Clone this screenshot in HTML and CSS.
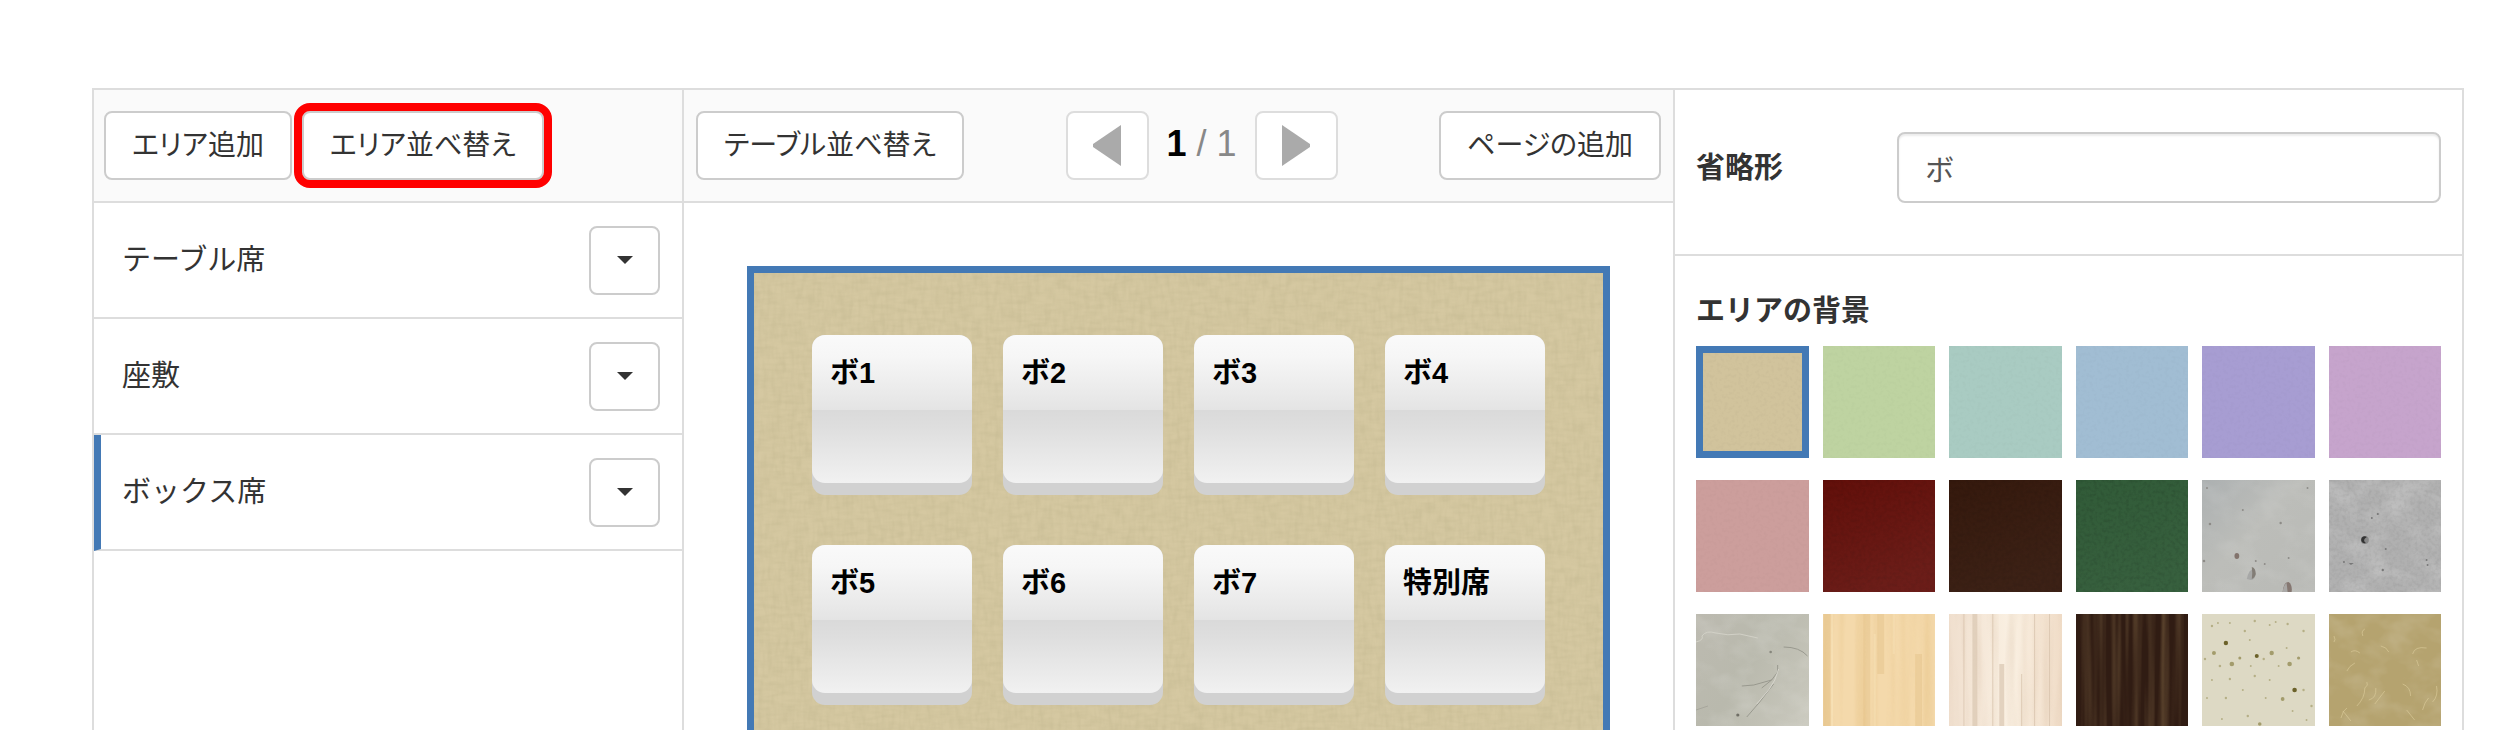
FILE: index.html
```html
<!DOCTYPE html>
<html lang="ja">
<head>
<meta charset="utf-8">
<title>エリア設定</title>
<link rel="stylesheet" href="styles.css">
</head>
<body>
<svg class="defs" width="0" height="0" aria-hidden="true">
  <defs>
    <filter id="weave-v" x="0" y="0" width="100%" height="100%">
      <feTurbulence type="fractalNoise" baseFrequency="0.22 0.06" numOctaves="2" seed="3"/>
      <feColorMatrix values="0 0 0 0 .45  0 0 0 0 .4  0 0 0 0 .22  .8 0 0 0 -.3"/>
    </filter>
    <filter id="weave-h" x="0" y="0" width="100%" height="100%">
      <feTurbulence type="fractalNoise" baseFrequency="0.06 0.22" numOctaves="2" seed="8"/>
      <feColorMatrix values="0 0 0 0 .45  0 0 0 0 .4  0 0 0 0 .22  .8 0 0 0 -.3"/>
    </filter>
    <filter id="grain" x="0" y="0" width="100%" height="100%">
      <feTurbulence type="fractalNoise" baseFrequency="0.28" numOctaves="2" seed="5"/>
      <feColorMatrix values="0 0 0 0 0  0 0 0 0 0  0 0 0 0 0  1 0 0 0 -.42"/>
    </filter>
    <filter id="cloud" x="0" y="0" width="100%" height="100%">
      <feTurbulence type="fractalNoise" baseFrequency="0.035 0.05" numOctaves="3" seed="12"/>
      <feColorMatrix values="0 0 0 0 1  0 0 0 0 1  0 0 0 0 1  2 0 0 0 -.8"/>
    </filter>
    <filter id="wood" x="0" y="0" width="100%" height="100%">
      <feTurbulence type="fractalNoise" baseFrequency="0.09 0.004" numOctaves="2" seed="4"/>
      <feColorMatrix values="0 0 0 0 .75  0 0 0 0 .5  0 0 0 0 .2  1.4 0 0 0 -.55"/>
    </filter>
    <filter id="pale-wood" x="0" y="0" width="100%" height="100%">
      <feTurbulence type="fractalNoise" baseFrequency="0.1 0.008" numOctaves="2" seed="21"/>
      <feColorMatrix values="0 0 0 0 .68  0 0 0 0 .52  0 0 0 0 .38  1.4 0 0 0 -.6"/>
    </filter>
    <filter id="dark-wood" x="0" y="0" width="100%" height="100%">
      <feTurbulence type="fractalNoise" baseFrequency="0.14 0.005" numOctaves="2" seed="9"/>
      <feColorMatrix values="0 0 0 0 .42  0 0 0 0 .28  0 0 0 0 .12  1.2 0 0 0 -.45"/>
    </filter>
    <linearGradient id="shade" x1="0" y1="0" x2="0.4" y2="1">
      <stop offset="0" stop-color="#fff" stop-opacity="0"/>
      <stop offset="1" stop-color="#fff" stop-opacity=".06"/>
    </linearGradient>
  </defs>
</svg>

<main class="app">
  <section class="areas">
    <header class="toolbar toolbar-areas">
      <button class="btn" type="button">エリア追加</button>
      <button class="btn highlighted" type="button">エリア並べ替え</button>
    </header>
    <ul class="area-list">
      <li class="area-row">
        <span class="area-name">テーブル席</span>
        <button class="btn btn-caret" type="button" aria-label="テーブル席のメニュー"><svg width="16" height="8" viewBox="0 0 16 8"><path d="M0 0h16L8 8z" fill="#333"/></svg></button>
      </li>
      <li class="area-row">
        <span class="area-name">座敷</span>
        <button class="btn btn-caret" type="button" aria-label="座敷のメニュー"><svg width="16" height="8" viewBox="0 0 16 8"><path d="M0 0h16L8 8z" fill="#333"/></svg></button>
      </li>
      <li class="area-row selected">
        <span class="area-name">ボックス席</span>
        <button class="btn btn-caret" type="button" aria-label="ボックス席のメニュー"><svg width="16" height="8" viewBox="0 0 16 8"><path d="M0 0h16L8 8z" fill="#333"/></svg></button>
      </li>
    </ul>
  </section>

  <section class="editor">
    <header class="toolbar toolbar-editor">
      <button class="btn" type="button">テーブル並べ替え</button>
      <div class="pager">
        <button class="btn btn-page" type="button" aria-label="前のページ"><svg width="28" height="41" viewBox="0 0 28 41"><path d="M28 0v41L0 22v-3z" fill="#aaa"/></svg></button>
        <span class="page-count"><strong>1</strong> / 1</span>
        <button class="btn btn-page" type="button" aria-label="次のページ"><svg width="28" height="41" viewBox="0 0 28 41"><path d="M0 0v41L28 22v-3z" fill="#aaa"/></svg></button>
      </div>
      <button class="btn" type="button">ページの追加</button>
    </header>
    <div class="canvas-wrap">
      <div class="canvas">
        <svg class="canvas-texture" width="100%" height="100%" aria-hidden="true">
          <rect width="100%" height="100%" filter="url(#weave-v)"/>
          <rect width="100%" height="100%" filter="url(#weave-h)"/>
        </svg>
        <div class="tables">
          <div class="seat"><div class="seat-face">ボ1</div></div>
          <div class="seat"><div class="seat-face">ボ2</div></div>
          <div class="seat"><div class="seat-face">ボ3</div></div>
          <div class="seat"><div class="seat-face">ボ4</div></div>
          <div class="seat"><div class="seat-face">ボ5</div></div>
          <div class="seat"><div class="seat-face">ボ6</div></div>
          <div class="seat"><div class="seat-face">ボ7</div></div>
          <div class="seat"><div class="seat-face">特別席</div></div>
        </div>
      </div>
    </div>
  </section>

  <section class="settings">
    <div class="field">
      <label class="field-label" for="short-name">省略形</label>
      <input class="field-input" id="short-name" type="text" value="ボ">
    </div>
    <fieldset class="backgrounds">
      <legend class="backgrounds-title">エリアの背景</legend>
      <div class="swatches">
        <label class="swatch beige"><input type="radio" name="bg" aria-label="ベージュ" checked><svg><rect width="100%" height="100%" filter="url(#grain)" opacity=".05"/></svg></label>
        <label class="swatch lime"><input type="radio" name="bg" aria-label="黄緑"><svg><rect width="100%" height="100%" filter="url(#grain)" opacity=".04"/></svg></label>
        <label class="swatch mint"><input type="radio" name="bg" aria-label="ミント"><svg><rect width="100%" height="100%" filter="url(#grain)" opacity=".04"/></svg></label>
        <label class="swatch blue"><input type="radio" name="bg" aria-label="水色"><svg><rect width="100%" height="100%" filter="url(#grain)" opacity=".04"/></svg></label>
        <label class="swatch violet"><input type="radio" name="bg" aria-label="紫"><svg><rect width="100%" height="100%" filter="url(#grain)" opacity=".04"/></svg></label>
        <label class="swatch pink"><input type="radio" name="bg" aria-label="ピンク"><svg><rect width="100%" height="100%" filter="url(#grain)" opacity=".04"/></svg></label>

        <label class="swatch rose"><input type="radio" name="bg" aria-label="ローズ"><svg><rect width="100%" height="100%" filter="url(#grain)" opacity=".04"/></svg></label>
        <label class="swatch red"><input type="radio" name="bg" aria-label="赤"><svg><rect width="100%" height="100%" filter="url(#grain)" opacity=".2"/><rect width="100%" height="100%" fill="url(#shade)"/></svg></label>
        <label class="swatch brown"><input type="radio" name="bg" aria-label="茶"><svg><rect width="100%" height="100%" filter="url(#grain)" opacity=".2"/><rect width="100%" height="100%" fill="url(#shade)" opacity=".6"/></svg></label>
        <label class="swatch green"><input type="radio" name="bg" aria-label="緑"><svg><rect width="100%" height="100%" filter="url(#grain)" opacity=".25"/><rect width="100%" height="100%" fill="url(#shade)" opacity=".5"/></svg></label>
        <label class="swatch concrete"><input type="radio" name="bg" aria-label="コンクリート"><svg viewBox="0 0 113 112" preserveAspectRatio="none">
          <rect width="113" height="112" filter="url(#cloud)" opacity=".1"/>
          <g fill="#8d8b87"><circle cx="5" cy="8" r="1"/><circle cx="106" cy="8" r="1"/><circle cx="41" cy="30" r="1"/><circle cx="8" cy="44" r="1.3"/><circle cx="79" cy="43" r="1.2"/><circle cx="2" cy="81" r="1.3"/><circle cx="54" cy="81" r="1"/><circle cx="87" cy="78" r="1"/><circle cx="63" cy="84" r="1"/></g>
          <ellipse cx="35" cy="76" rx="2.4" ry="3" fill="#82736c"/>
          <path d="M45 99q2-10 7-10l2 5q-1 6-5 6z" fill="#a7a8a7"/><path d="M50 87q4 1 4 7-1 4-4 5 1-6 0-12z" fill="#827d76"/>
          <path d="M81 112q1-10 6-10 4 3 3 10z" fill="#857771"/><path d="M81 112q1-7 4-9l1 9z" fill="#a9a8a6"/>
        </svg></label>
        <label class="swatch stone"><input type="radio" name="bg" aria-label="石"><svg viewBox="0 0 113 112" preserveAspectRatio="none">
          <rect width="113" height="112" filter="url(#cloud)" opacity=".2"/>
          <rect width="113" height="112" filter="url(#grain)" opacity=".12"/>
          <g fill="#777"><circle cx="49" cy="34" r="1.1"/><circle cx="43" cy="38" r="1"/><circle cx="15" cy="82" r="1"/><path d="M20 83l5 0-3 2z"/><circle cx="54" cy="90" r="1.2"/><circle cx="57" cy="69" r="1"/><circle cx="98" cy="80" r="1"/><circle cx="99" cy="85" r="1"/></g>
          <circle cx="36" cy="60" r="4" fill="#888"/><path d="M38 57a3.500 3.500 0 1 0-1 6q-4-3 1-6z" fill="#333"/>
        </svg></label>

        <label class="swatch plaster"><input type="radio" name="bg" aria-label="漆喰"><svg viewBox="0 0 113 112" preserveAspectRatio="none">
          <rect width="113" height="112" filter="url(#cloud)" opacity=".14"/>
          <path d="M0 28q8-2 6-6 4-6 14-3 12 3 24 1l18 4" fill="none" stroke="#d2d1c7"/>
          <path d="M88 33q16 0 24 9M82 51l0 7-6 8-18 5-12 1M76 66l-10 8M78 70l-14 18-13 15" fill="none" stroke="#8f8f85" stroke-width=".8"/>
          <path d="M83 55q-3 12-10 21l-12 14" fill="none" stroke="#dddcd4" stroke-width=".8"/>
          <circle cx="75" cy="38" r="1.300" fill="#87877d"/><circle cx="42" cy="101" r="1.600" fill="#6f6e65"/><path d="M0 96l12-4" stroke="#a7a69c"/>
        </svg></label>
        <label class="swatch light-wood"><input type="radio" name="bg" aria-label="明るい木目"><svg viewBox="0 0 113 112" preserveAspectRatio="none">
          <path d="M4 0v112M44 0v112M58 0v60M96 40v72" stroke="#e6c48d" stroke-width="7" opacity=".5"/><path d="M9 0v112M52 20v92M71 0v40" stroke="#fae5bd" stroke-width="2" opacity=".6"/>
          <rect width="113" height="112" filter="url(#wood)" opacity=".6"/>
        </svg></label>
        <label class="swatch white-wood"><input type="radio" name="bg" aria-label="白い木目"><svg viewBox="0 0 113 112" preserveAspectRatio="none">
          <path d="M26 0v112M53 50v62" stroke="#dac7b2" stroke-width="5" opacity=".7"/><path d="M15 0v112M44 0v112M73 60v52M86 0v112M101 0v112" stroke="#d8c4ae" opacity=".8"/>
          <rect width="113" height="112" filter="url(#pale-wood)" opacity=".5"/>
        </svg></label>
        <label class="swatch black-wood"><input type="radio" name="bg" aria-label="暗い木目"><svg><rect width="100%" height="100%" filter="url(#dark-wood)" opacity=".6"/></svg></label>
        <label class="swatch terrazzo"><input type="radio" name="bg" aria-label="テラゾー"><svg viewBox="0 0 113 112" preserveAspectRatio="none">
          <g fill="#b5af86"><circle cx="10" cy="12" r="1.2"/><circle cx="16" cy="9" r="1"/><circle cx="28" cy="9" r="1"/><circle cx="53" cy="7" r="1.2"/><circle cx="68" cy="11" r="1"/><circle cx="74" cy="8" r="1"/><circle cx="86" cy="10" r="1.2"/><circle cx="43" cy="17" r="1.200"/><circle cx="102" cy="17" r="1.200"/><circle cx="48" cy="26" r="1"/><circle cx="85" cy="34" r="1"/><circle cx="18" cy="52" r="1.300"/><circle cx="49" cy="52" r="1"/><circle cx="62" cy="45" r="1.200"/><circle cx="77" cy="52" r="1"/><circle cx="28" cy="65" r="1.200"/><circle cx="53" cy="62" r="1.200"/><circle cx="10" cy="66" r="1"/><circle cx="68" cy="66" r="1"/><circle cx="24" cy="84" r="1.200"/><circle cx="41" cy="76" r="1"/><circle cx="64" cy="84" r="1"/><circle cx="102" cy="76" r="1.200"/><circle cx="46" cy="102" r="1.200"/><circle cx="20" cy="105" r="1"/><circle cx="91" cy="97" r="1"/><circle cx="110" cy="92" r="1.200"/><circle cx="5" cy="84" r="1"/><circle cx="3" cy="45" r="1.200"/><circle cx="105" cy="106" r="1"/></g>
          <g fill="#a39c6c"><circle cx="12" cy="39" r="2"/><circle cx="30" cy="50" r="2.300"/><circle cx="38" cy="44" r="1.500"/><circle cx="70" cy="39" r="2.200"/><circle cx="88" cy="50" r="2.300"/><circle cx="97" cy="44" r="1.600"/><circle cx="81" cy="85" r="1.900"/><circle cx="58" cy="110" r="1.800"/></g>
          <g fill="#6b6129"><circle cx="24" cy="29" r="2.200"/><circle cx="55" cy="42" r="2"/><circle cx="93" cy="76" r="2.300"/></g>
        </svg></label>
        <label class="swatch washi"><input type="radio" name="bg" aria-label="和紙"><svg viewBox="0 0 113 112" preserveAspectRatio="none">
          <rect width="113" height="112" filter="url(#cloud)" opacity=".14"/>
          <g fill="none" stroke="#ddcf9e" stroke-width="1" opacity=".6"><path d="M36 15q-4 2-2 7M5 22q2 4 0 6M18 57q2-5 8-8M84 40q2-8 14-6M52 32q6 1 8 6M28 92q8-8 8-18 4-3 2-6M46 90l10-13M74 70q8 3 8 12M108 72q2 10-4 16M94 96q2-8 6-12M12 104q2-8 6-10M14 97l8 10M40 86q8-2 7-12M78 96l8 10M88 46l2 6M22 38q4-3 9 1"/></g>
        </svg></label>
      </div>
    </fieldset>
  </section>
</main>
</body>
</html>
```
FILE: styles.css
```css
:root {
  --line: #ddd;
  --control-line: #ccc;
  --accent: #4379b5;
  --text: #333;
}

* {
  box-sizing: border-box;
}

body {
  margin: 0;
  min-height: 100vh;
  display: flex;
  flex-direction: column;
  padding: 88px 40px 0 92px;
  background: #fff;
  color: var(--text);
  font-family: "Liberation Sans", "Noto Sans CJK JP", sans-serif;
  font-size: 29px;
  line-height: 40px;
}

.defs {
  position: absolute;
}

.app {
  flex: 1;
  display: grid;
  grid-template-columns: 590fr 991fr 787fr;
  border: 2px solid var(--line);
  border-bottom: 0;
}

.areas,
.editor {
  display: flex;
  flex-direction: column;
  border-right: 2px solid var(--line);
}

.toolbar {
  display: flex;
  align-items: center;
  padding: 21px 12px;
  border-bottom: 2px solid var(--line);
  background: #fafafa;
}

.toolbar-areas {
  gap: 10px;
  padding-left: 10px;
}

.toolbar-editor {
  justify-content: space-between;
}

.btn {
  display: inline-flex;
  align-items: center;
  justify-content: center;
  height: 69px;
  padding: 0 26px;
  border: 2px solid var(--control-line);
  border-radius: 8px;
  background: #fff;
  color: var(--text);
  font: inherit;
  font-size: 28px;
  font-feature-settings: "palt";
  white-space: nowrap;
}

.highlighted {
  outline: 8px solid #f00;
}

.btn-caret {
  width: 71px;
  padding: 0;
}

.btn-page {
  width: 83px;
  padding: 0;
  border-color: var(--line);
}

.pager {
  display: flex;
  align-items: center;
  gap: 18px;
}

.page-count {
  padding-bottom: 4px;
  color: #888;
  font-size: 36px;
}

.page-count strong {
  color: #000;
}

.area-list {
  margin: 0;
  padding: 0;
  list-style: none;
}

.area-row {
  display: flex;
  align-items: center;
  justify-content: space-between;
  height: 116px;
  padding: 0 22px 0 28px;
  border-bottom: 2px solid var(--line);
}

.area-row.selected {
  padding-left: 21px;
  border-left: 7px solid var(--accent);
}

.canvas-wrap {
  flex: 1;
  display: flex;
  padding: 63px 63px 0;
}

.canvas {
  position: relative;
  flex: 1;
  padding: 62px 58px 24px;
  border: 7px solid var(--accent);
  border-bottom: 0;
  background: #d5c8a1;
}

.canvas-texture {
  position: absolute;
  inset: 0;
  opacity: .5;
}

.tables {
  position: relative;
  display: grid;
  grid-template-columns: repeat(4, 160px);
  gap: 50px 31px;
}

.seat {
  height: 160px;
  padding-bottom: 12px;
  border-radius: 13px;
  background: #d1d1d1;
}

.seat-face {
  height: 148px;
  padding: 18px;
  border-radius: 13px;
  background: linear-gradient(#fafafa 0%, #f6f6f6 15%, #e4e4e4 51%, #dadada 51%, #dedede 62%, #f1f1f1 100%);
  color: #000;
  font-weight: bold;
}

.field {
  display: flex;
  align-items: center;
  padding: 42px 21px 51px;
  border-bottom: 2px solid var(--line);
}

.field-label {
  flex: 0 0 27%;
  font-weight: bold;
}

.field-input {
  flex: 1;
  min-width: 0;
  height: 71px;
  padding: 0 26px;
  border: 2px solid var(--control-line);
  border-radius: 8px;
  box-shadow: inset 0 2px 2px rgba(0, 0, 0, .08);
  background: #fff;
  color: #555;
  font: inherit;
}

.backgrounds {
  margin: 0;
  padding: 0 21px;
  border: 0;
}

.backgrounds-title {
  padding: 35px 0 15px;
  font-weight: bold;
}

.swatches {
  display: grid;
  grid-template-columns: repeat(6, 1fr);
  gap: 22px 14px;
}

.swatch {
  display: grid;
  height: 112px;
}

.swatch input,
.swatch svg {
  grid-area: 1 / 1;
  width: 100%;
  height: 100%;
  min-height: 0;
  margin: 0;
}

.swatch input {
  appearance: none;
}

.swatch svg {
  overflow: hidden;
  pointer-events: none;
}

.swatch input:checked {
  z-index: 1;
  border: 7px solid var(--accent);
}

.beige { background: #d1c39c; }
.lime { background: #bed3a1; }
.mint { background: #a9cbc2; }
.blue { background: #a1bdd3; }
.violet { background: #a79dd2; }
.pink { background: #c6a4cc; }
.rose { background: #cc9e9c; }
.red { background: #620f0a; }
.brown { background: #35190d; }
.green { background: #315b38; }
.concrete { background: linear-gradient(135deg, #acb0b1, #bcbdb9 45%, #b9bab6); }
.stone { background: #b0b0b0; }
.plaster { background: linear-gradient(120deg, #bcbab0, #b9b9ad 45%, #cac9be); }
.light-wood { background: #f4d9ab; }
.white-wood { background: linear-gradient(90deg, #f0dfce, #faf0e2 55%, #f0dcc7); }
.black-wood { background: #301c13; }
.terrazzo { background: #ddd9c4; }
.washi { background: #b5a36f; }
```
